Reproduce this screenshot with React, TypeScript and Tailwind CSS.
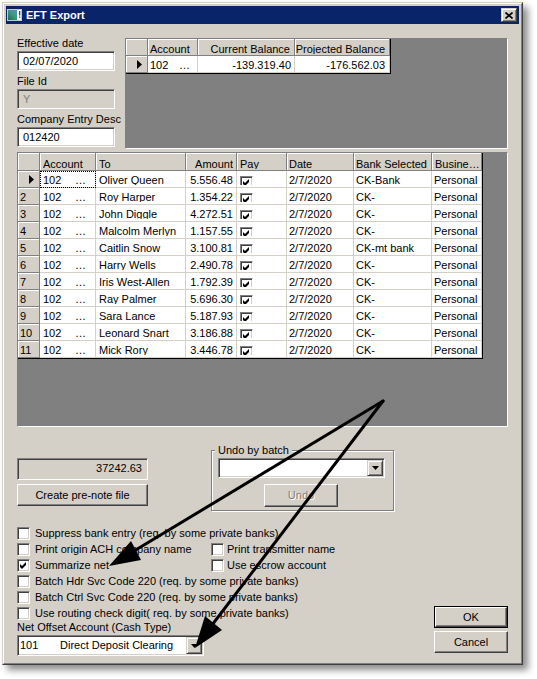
import React from 'react';

const sunken =
  "border border-t-[#808080] border-l-[#808080] border-r-white border-b-white shadow-[inset_1px_1px_0_#404040,inset_-1px_-1px_0_#d4d0c8]";
const raisedBtn =
  "border border-t-white border-l-white border-r-[#404040] border-b-[#404040] shadow-[inset_-1px_-1px_0_#808080] bg-[#d4d0c8]";
const raisedEdge =
  "border border-t-[#d4d0c8] border-l-[#d4d0c8] border-r-[#404040] border-b-[#404040] shadow-[inset_1px_1px_0_#fff,inset_-1px_-1px_0_#808080] bg-[#d4d0c8]";
const hdrCell =
  "bg-[#d4d0c8] border-r border-b border-r-[#808080] border-b-[#808080] shadow-[inset_1px_1px_0_#fff] overflow-hidden shrink-0";
const dataCell =
  "bg-white border-r border-b border-r-[#d4d0c8] border-b-[#d4d0c8] overflow-hidden shrink-0";

function Clip({ children, className = "" }: { children?: React.ReactNode; className?: string }) {
  return (
    <div className={"h-[10px] leading-[11px] overflow-hidden whitespace-nowrap " + className}>{children}</div>
  );
}

function Tri() {
  return (
    <svg width="5" height="9" viewBox="0 0 5 9">
      <polygon points="0,0 5,4.5 0,9" fill="#000" />
    </svg>
  );
}

function CheckSvg() {
  return (
    <svg width="9" height="9" viewBox="0 0 9 9">
      <polygon points="1,3 3,5 7,1 7,4 3,8 1,6" fill="#000" />
    </svg>
  );
}

function CB({ checked = false }: { checked?: boolean }) {
  return (
    <div className={"mt-[2px] w-[13px] h-[13px] bg-white shrink-0 flex items-center justify-center " + sunken}>
      {checked && <CheckSvg />}
    </div>
  );
}

function DownArrow() {
  return (
    <svg width="7" height="4" viewBox="0 0 7 4">
      <polygon points="0,0 7,0 3.5,4" fill="#000" />
    </svg>
  );
}

function AppIcon() {
  return (
    <svg width="16" height="14" viewBox="0 0 16 14" className="block shrink-0 w-[16px] h-[14px]">
      <defs>
        <linearGradient id="ig" x1="0" y1="1" x2="1" y2="0">
          <stop offset="0" stopColor="#1d6a4a" />
          <stop offset="0.5" stopColor="#3a9a78" />
          <stop offset="1" stopColor="#5a8fd0" />
        </linearGradient>
      </defs>
      <rect x="0" y="1" width="15" height="12" fill="#c8c8c8" />
      <rect x="1" y="2" width="9" height="10" fill="url(#ig)" />
      <rect x="10" y="2" width="4" height="10" fill="#ffffff" />
      <rect x="12" y="3" width="1.3" height="4.5" fill="#1f3f9f" />
      <rect x="12" y="8.5" width="1.3" height="1.3" fill="#1f3f9f" />
    </svg>
  );
}

function Field({ label, value, disabled = false }: { label: string; value: string; disabled?: boolean }) {
  return (
    <div className="flex flex-col">
      <div className="h-[13px] mb-[1px] whitespace-nowrap">{label}</div>
      <div
        className={
          "h-[20px] pl-[5px] leading-[18px] " +
          sunken +
          (disabled ? " bg-[#d4d0c8] text-[#808080]" : " bg-white")
        }
      >
        {value}
      </div>
    </div>
  );
}

const rows: [string, string, string][] = [
  ["Oliver Queen", "5.556.48", "CK-Bank"],
  ["Roy Harper", "1.354.22", "CK-"],
  ["John Diggle", "4.272.51", "CK-"],
  ["Malcolm Merlyn", "1.157.55", "CK-"],
  ["Caitlin Snow", "3.100.81", "CK-mt bank"],
  ["Harry Wells", "2.490.78", "CK-"],
  ["Iris West-Allen", "1.792.39", "CK-"],
  ["Ray Palmer", "5.696.30", "CK-"],
  ["Sara Lance", "5.187.93", "CK-"],
  ["Leonard Snart", "3.186.88", "CK-"],
  ["Mick Rory", "3.446.78", "CK-"],
];

function TopGrid() {
  return (
    <div className="flex flex-col w-max border-r border-b border-black">
      <div className="flex h-[17px]">
        <div className={hdrCell + " w-[22px]"} />
        <div className={hdrCell + " w-[50px] pl-[2px] pt-[5px]"}>
          <Clip>Account</Clip>
        </div>
        <div className={hdrCell + " w-[97px] pr-[4px] pt-[5px] text-right"}>
          <Clip>Current Balance</Clip>
        </div>
        <div className={hdrCell + " w-[95px] pr-[4px] pt-[5px] text-right"}>
          <Clip>Projected Balance</Clip>
        </div>
      </div>
      <div className="flex h-[17px]">
        <div className={hdrCell + " w-[22px] flex justify-end pr-[5px] pt-[4px]"}>
          <Tri />
        </div>
        <div className={dataCell + " w-[50px] pl-[2px] pr-[7px] pt-[4px]"}>
          <Clip className="flex justify-between">
            <span>102</span>
            <span>…</span>
          </Clip>
        </div>
        <div className={dataCell + " w-[97px] pr-[3px] pt-[4px] text-right"}>
          <Clip>-139.319.40</Clip>
        </div>
        <div className={dataCell + " w-[95px] pr-[4px] pt-[4px] text-right"}>
          <Clip>-176.562.03</Clip>
        </div>
      </div>
    </div>
  );
}

function GridCheck() {
  return (
    <div className="h-[10px] overflow-hidden">
      <div className={"mt-[1px] w-[13px] h-[13px] bg-white flex items-center justify-center " + sunken}>
        <CheckSvg />
      </div>
    </div>
  );
}

function MainGrid() {
  return (
    <div className="flex flex-col w-max border-r border-b border-black">
      <div className="flex h-[18px]">
        <div className={hdrCell + " w-[22px]"} />
        <div className={hdrCell + " w-[56px] pl-[3px] pt-[6px]"}>
          <Clip>Account</Clip>
        </div>
        <div className={hdrCell + " w-[90px] pl-[3px] pt-[6px]"}>
          <Clip>To</Clip>
        </div>
        <div className={hdrCell + " w-[51px] pr-[3px] pt-[6px] text-right"}>
          <Clip>Amount</Clip>
        </div>
        <div className={hdrCell + " w-[50px] pl-[3px] pt-[6px]"}>
          <Clip>Pay</Clip>
        </div>
        <div className={hdrCell + " w-[67px] pl-[2px] pt-[6px]"}>
          <Clip>Date</Clip>
        </div>
        <div className={hdrCell + " w-[78px] pl-[2px] pt-[6px]"}>
          <Clip>Bank Selected</Clip>
        </div>
        <div className={hdrCell + " w-[50px] pl-[3px] pt-[6px]"}>
          <Clip>Busine…</Clip>
        </div>
      </div>
      {rows.map(([to, amt, bank], i) => (
        <div key={i} className="flex h-[17px]">
          {i === 0 ? (
            <div className={hdrCell + " w-[22px] flex justify-end pr-[5px] pt-[4px]"}>
              <Tri />
            </div>
          ) : (
            <div className={hdrCell + " w-[22px] pl-[2px] pt-[4px]"}>
              <Clip>{i + 1}</Clip>
            </div>
          )}
          <div
            className={
              dataCell +
              " w-[56px] pl-[3px] pr-[9px] pt-[4px]" +
              (i === 0 ? " outline-1 outline-dotted outline-black -outline-offset-1" : "")
            }
          >
            <Clip className="flex justify-between">
              <span>102</span>
              <span>…</span>
            </Clip>
          </div>
          <div className={dataCell + " w-[90px] pl-[3px] pt-[4px]"}>
            <Clip>{to}</Clip>
          </div>
          <div className={dataCell + " w-[51px] pr-[3px] pt-[4px] text-right"}>
            <Clip>{amt}</Clip>
          </div>
          <div className={dataCell + " w-[50px] pl-[3px] pt-[4px]"}>
            <GridCheck />
          </div>
          <div className={dataCell + " w-[67px] pl-[2px] pt-[4px]"}>
            <Clip>2/7/2020</Clip>
          </div>
          <div className={dataCell + " w-[78px] pl-[2px] pt-[4px]"}>
            <Clip>{bank}</Clip>
          </div>
          <div className={dataCell + " w-[50px] pl-[2px] pt-[4px]"}>
            <Clip>Personal</Clip>
          </div>
        </div>
      ))}
    </div>
  );
}

function Arrows() {
  return (
    <svg className="absolute left-0 top-0 pointer-events-none" width="537" height="679" viewBox="0 0 537 679">
      <line x1="383" y1="401" x2="134" y2="551" stroke="#000" strokeWidth="3" strokeLinecap="round" />
      <polygon points="109,566 141,560 131,541" fill="#000" />
      <line x1="383" y1="401" x2="212" y2="625" stroke="#000" strokeWidth="3" strokeLinecap="round" />
      <polygon points="195,648 222,630 205,616" fill="#000" />
    </svg>
  );
}

export default function App() {
  return (
    <div className="relative w-[537px] h-[679px] bg-white overflow-hidden pt-[2px] pl-[2px] font-['Liberation_Sans',Arial,sans-serif] text-[11px] leading-[13px] text-black">
      <div className="w-[521px] h-[663px] bg-[#d4d0c8] border border-t-[#d4d0c8] border-l-[#d4d0c8] border-r-[#404040] border-b-[#404040] shadow-[5px_5px_7px_rgba(0,0,0,0.45)]">
        <div className="h-full border border-t-white border-l-white border-r-[#808080] border-b-[#808080] p-[2px] flex flex-col">
          {/* Title bar */}
          <div className="h-[18px] bg-[#0a246a] flex items-center pl-[1px] pr-[2px] shrink-0">
            <AppIcon />
            <span className="ml-[3px] text-white font-bold text-[11px] leading-[13px]">EFT Export</span>
            <div className={"ml-auto w-[16px] h-[14px] flex items-center justify-center " + raisedEdge}>
              <svg width="8" height="7" viewBox="0 0 8 7">
                <path d="M0.5 0.5 L7.5 6.5 M7.5 0.5 L0.5 6.5" stroke="#000" strokeWidth="1.6" />
              </svg>
            </div>
          </div>

          {/* Content */}
          <div className="flex flex-col px-[11px]">
            {/* Top row */}
            <div className="flex mt-[13px]">
              <div className="w-[98px] flex flex-col gap-[4px] shrink-0">
                <Field label="Effective date" value="02/07/2020" />
                <Field label="File Id" value="Y" disabled />
                <Field label="Company Entry Desc" value="012420" />
              </div>
              <div className="ml-[10px] mt-[1px] w-[383px] h-[111px] bg-[#808080] border border-t-[#808080] border-l-[#808080] border-r-white border-b-white">
                <TopGrid />
              </div>
            </div>

            {/* Main grid */}
            <div className="mt-[3px] h-[275px] bg-[#808080] border border-t-[#808080] border-l-[#808080] border-r-white border-b-white">
              <MainGrid />
            </div>

            {/* Middle row */}
            <div className="flex mt-[17px] h-[67px]">
              <div className="w-[131px] flex flex-col pt-[14px] gap-[4px] shrink-0">
                <div className={"h-[22px] bg-[#d4d0c8] text-right pr-[5px] leading-[18px] " + sunken}>37242.63</div>
                <div className={"h-[22px] flex items-center justify-center pt-[1px] " + raisedBtn}>
                  Create pre-note file
                </div>
              </div>
              <fieldset className="ml-[63px] w-[183px] h-[67px] border border-[#808080] shadow-[inset_1px_1px_0_#fff,1px_1px_0_#fff] p-0 m-0 min-w-0">
                <legend className="ml-[3px] px-[3px] leading-[13px] bg-[#d4d0c8]">Undo by batch</legend>
                <div className={"ml-[6px] mt-[1px] w-[167px] h-[20px] bg-white p-[1px] flex " + sunken}>
                  <div className="flex-1" />
                  <div className={"w-[16px] h-full flex items-center justify-center " + raisedEdge}>
                    <DownArrow />
                  </div>
                </div>
                <div
                  className={
                    "ml-[52px] mt-[6px] w-[74px] h-[23px] flex items-center justify-center text-[#808080] [text-shadow:1px_1px_0_#fff] " +
                    raisedBtn
                  }
                >
                  Undo
                </div>
              </fieldset>
            </div>

            {/* Bottom */}
            <div className="flex mt-[14px]">
              <div className="flex flex-col">
                <div className="flex h-[16px] whitespace-nowrap">
                  <CB />
                  <span className="ml-[5px] leading-[16px]">Suppress bank entry (req. by some private banks)</span>
                </div>
                <div className="flex h-[16px] whitespace-nowrap">
                  <div className="flex w-[194px]">
                    <CB />
                    <span className="ml-[5px] leading-[16px]">Print origin ACH company name</span>
                  </div>
                  <CB />
                  <span className="ml-[3px] leading-[16px]">Print transmitter name</span>
                </div>
                <div className="flex h-[16px] whitespace-nowrap">
                  <div className="flex w-[194px]">
                    <CB checked />
                    <span className="ml-[5px] leading-[16px]">Summarize net</span>
                  </div>
                  <CB />
                  <span className="ml-[3px] leading-[16px]">Use escrow account</span>
                </div>
                <div className="flex h-[16px] whitespace-nowrap">
                  <CB />
                  <span className="ml-[5px] leading-[16px]">Batch Hdr Svc Code 220 (req. by some private banks)</span>
                </div>
                <div className="flex h-[16px] whitespace-nowrap">
                  <CB />
                  <span className="ml-[5px] leading-[16px]">Batch Ctrl Svc Code 220 (req. by some private banks)</span>
                </div>
                <div className="flex h-[16px] whitespace-nowrap">
                  <CB />
                  <span className="ml-[5px] leading-[16px]">Use routing check digit( req. by some private banks)</span>
                </div>
                <div className="h-[13px] mb-[1px] whitespace-nowrap">Net Offset Account (Cash Type)</div>
                <div className={"w-[187px] h-[21px] bg-white p-[1px] flex " + sunken}>
                  <div className="flex-1 flex leading-[17px] pl-[1px] whitespace-nowrap">
                    <span className="w-[40px]">101</span>
                    <span>Direct Deposit Clearing</span>
                  </div>
                  <div className={"w-[16px] h-full flex items-center justify-center " + raisedEdge}>
                    <DownArrow />
                  </div>
                </div>
              </div>
              <div className="ml-auto flex flex-col pt-[81px] gap-[3px]">
                <div className="w-[74px] h-[22px] border border-black flex">
                  <div className={"flex-1 flex items-center justify-center pt-[1px] " + raisedBtn}>OK</div>
                </div>
                <div className={"w-[74px] h-[22px] flex items-center justify-center " + raisedBtn}>Cancel</div>
              </div>
            </div>
          </div>
        </div>
      </div>
      <Arrows />
    </div>
  );
}
